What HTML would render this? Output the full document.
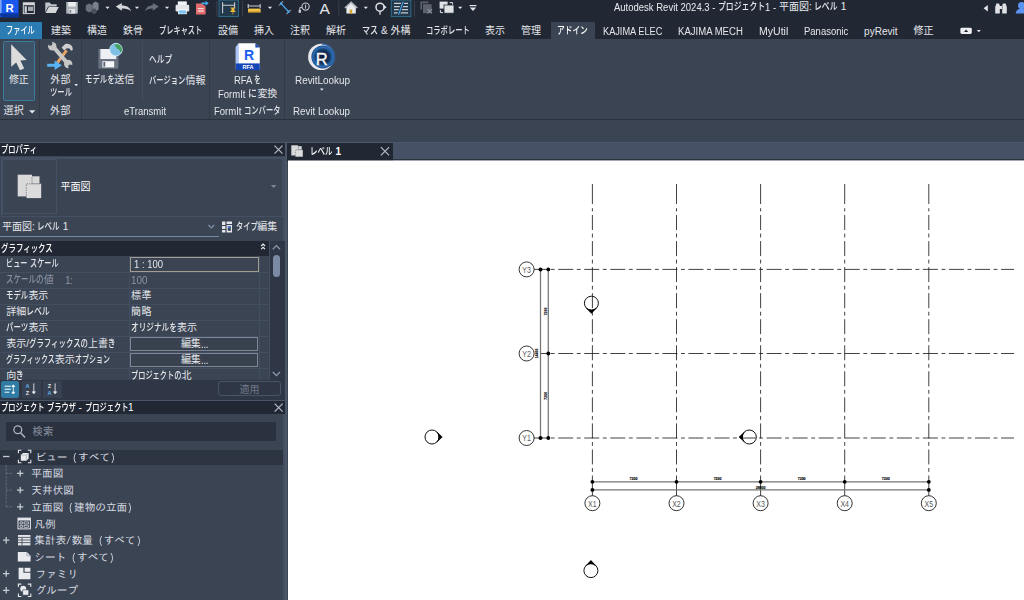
<!DOCTYPE html>
<html lang="ja"><head><meta charset="utf-8"><title>Autodesk Revit 2024.3 - プロジェクト1 - 平面図: レベル 1</title>
<style>
html,body{margin:0;padding:0;background:#3b4453;overflow:hidden}
#root{position:relative;width:1024px;height:600px;overflow:hidden;background:#3b4453;font-family:'Liberation Sans','Noto Sans CJK JP',sans-serif}
.b{position:absolute;box-sizing:border-box}
.t{position:absolute;white-space:pre}
.k{display:inline-block;transform-origin:0 50%;white-space:pre;font-weight:500}
svg{position:absolute;overflow:visible}
</style></head><body><div id="root">
<div class="b" style="left:0.00px;top:0.00px;width:1024.00px;height:39.00px;background:#212834;"></div>
<div class="b" style="left:0.00px;top:21.50px;width:41.50px;height:17.00px;background:#2b7cb3;"></div>
<div class="b" style="left:550.50px;top:21.50px;width:44.00px;height:18.00px;background:#3b4453;"></div>
<div class="b" style="left:0.00px;top:39.00px;width:1024.00px;height:80.50px;background:#3b4453;"></div>
<div class="b" style="left:0.00px;top:119.00px;width:1024.00px;height:1.00px;background:#2a313d;"></div>
<div class="b" style="left:0.00px;top:142.00px;width:1024.00px;height:1.20px;background:#4b566a;"></div>
<div class="b" style="left:39.00px;top:40.00px;width:1.00px;height:79.00px;background:#323a47;"></div>
<div class="b" style="left:81.00px;top:40.00px;width:1.00px;height:79.00px;background:#323a47;"></div>
<div class="b" style="left:209.00px;top:40.00px;width:1.00px;height:79.00px;background:#323a47;"></div>
<div class="b" style="left:284.00px;top:40.00px;width:1.00px;height:79.00px;background:#323a47;"></div>
<div class="b" style="left:141.60px;top:41.00px;width:1.00px;height:60.00px;background:#434c5d;"></div>
<div class="b" style="left:3.30px;top:41.30px;width:31.40px;height:59.50px;background:#3d5267;border:1px solid #3c7c9e;border-radius:1.5px;"></div>
<div class="b" style="left:0.00px;top:143.20px;width:284.70px;height:13.30px;background:#212834;"></div>
<div class="b" style="left:0.00px;top:156.50px;width:284.70px;height:1.00px;background:#465166;"></div>
<div class="b" style="left:284.70px;top:143.20px;width:2.80px;height:457.00px;background:#4a5568;"></div>
<div class="b" style="left:283.00px;top:157.50px;width:1.70px;height:443.00px;background:#434d60;"></div>
<div class="b" style="left:1.00px;top:157.60px;width:282.00px;height:59.00px;border:1px solid #455064;"></div>
<div class="b" style="left:2.20px;top:159.20px;width:54.80px;height:54.80px;border:1px solid #465166;"></div>
<div class="b" style="left:0.00px;top:235.80px;width:218.50px;height:1.10px;background:#7489a8;"></div>
<div class="b" style="left:0.00px;top:241.00px;width:269.00px;height:14.50px;background:#212834;"></div>
<div class="b" style="left:0.00px;top:271.50px;width:269.00px;height:1.00px;background:#444e61;"></div>
<div class="b" style="left:0.00px;top:287.50px;width:269.00px;height:1.00px;background:#444e61;"></div>
<div class="b" style="left:0.00px;top:303.50px;width:269.00px;height:1.00px;background:#444e61;"></div>
<div class="b" style="left:0.00px;top:319.50px;width:269.00px;height:1.00px;background:#444e61;"></div>
<div class="b" style="left:0.00px;top:335.50px;width:269.00px;height:1.00px;background:#444e61;"></div>
<div class="b" style="left:0.00px;top:351.50px;width:269.00px;height:1.00px;background:#444e61;"></div>
<div class="b" style="left:0.00px;top:367.50px;width:269.00px;height:1.00px;background:#444e61;"></div>
<div class="b" style="left:129.30px;top:255.50px;width:1.00px;height:125.00px;background:#444e61;"></div>
<div class="b" style="left:258.80px;top:255.50px;width:1.00px;height:125.00px;background:#444e61;"></div>
<div class="b" style="left:269.00px;top:241.00px;width:1.00px;height:140.00px;background:#444e61;"></div>
<div class="b" style="left:129.60px;top:256.50px;width:129.20px;height:15.20px;border:1px solid #a39c93;"></div>
<div class="b" style="left:130.20px;top:337.20px;width:128.00px;height:14.20px;background:#39414f;border:1px solid #7d8696;"></div>
<div class="b" style="left:130.20px;top:353.30px;width:128.00px;height:14.20px;background:#39414f;border:1px solid #7d8696;"></div>
<div class="b" style="left:269.50px;top:241.00px;width:15.20px;height:140.00px;background:#2f3746;"></div>
<div class="b" style="left:273.00px;top:254.50px;width:7.00px;height:22.00px;background:#7b8aa5;border-radius:3.5px;"></div>
<div class="b" style="left:0.00px;top:380.30px;width:284.70px;height:19.40px;background:#2f3746;"></div>
<div class="b" style="left:0.90px;top:381.00px;width:18.00px;height:16.60px;background:#2f7ba4;border-radius:2px;"></div>
<div class="b" style="left:22.00px;top:381.00px;width:18.80px;height:16.60px;background:#384152;"></div>
<div class="b" style="left:43.20px;top:381.00px;width:18.80px;height:16.60px;background:#384152;"></div>
<div class="b" style="left:218.00px;top:381.00px;width:63.00px;height:14.60px;border:1px solid #4a5468;border-radius:3px;"></div>
<div class="b" style="left:0.00px;top:399.60px;width:284.70px;height:1.00px;background:#4a5568;"></div>
<div class="b" style="left:0.00px;top:400.60px;width:284.70px;height:13.00px;background:#212834;"></div>
<div class="b" style="left:6.00px;top:422.40px;width:270.40px;height:18.60px;background:#2b323f;"></div>
<div class="b" style="left:0.00px;top:449.90px;width:283.00px;height:14.80px;background:#2c3441;"></div>
<div class="b" style="left:288.00px;top:143.00px;width:736.00px;height:17.50px;background:#475166;"></div>
<div class="b" style="left:288.00px;top:158.80px;width:736.00px;height:1.70px;background:#2b323e;"></div>
<div class="b" style="left:287.30px;top:143.00px;width:105.50px;height:17.50px;background:#212834;"></div>
<svg width="1024" height="600" viewBox="0 0 1024 600" style="left:0;top:0">
<rect x="0" y="0" width="18.5" height="17.2" fill="#1858ee"/>
<rect x="0" y="0" width="1.6" height="14" fill="#7da6f7"/>
<polygon points="0,13.2 18.5,13.2 18.5,17.2 2.2,17.2 0,15" fill="#0b369e"/>
<text x="9.6" y="11.6" font-family='"Liberation Sans",sans-serif' font-weight="bold" font-size="11.5" text-anchor="middle" fill="#fff">R</text>
<rect x="23.3" y="2.8" width="11" height="10.8" fill="none" stroke="#d4d6da" stroke-width="1"/>
<rect x="23.3" y="2.8" width="11" height="2.4" fill="#d4d6da"/>
<rect x="24.6" y="6.2" width="2.2" height="6.6" fill="#d4d6da"/>
<rect x="28" y="6.6" width="5.2" height="4.4" fill="#d4d6da" opacity="0.75"/>
<path d="M45.3 12.6 V2.6 h4.4 l1.4 1.6 h5.6 v2.2 h-8.6 l-2.8 6.2z" fill="#bfc2c8"/>
<path d="M45.6 12.9 l3.2 -6 h10 l-3.2 6z" fill="#d4d6da"/>
<path d="M66.2 2 h11.6 v11.6 h-11.6z" fill="#aeb2b9"/>
<rect x="68.2" y="2" width="7.6" height="4.6" fill="#eceef1"/>
<rect x="68.8" y="9" width="6.4" height="4.6" fill="#e0e2e6"/>
<rect x="69.6" y="10" width="1.6" height="2.8" fill="#7d828b"/>
<path d="M85.8 5.2 l3.4 -1.8 3.4 1.8 v5.4 l-3.4 1.8 -3.4 -1.8z" fill="#6b717c"/>
<path d="M92.6 3.2 l3 -1.8 3 1.8 v6.4 l-3 1.8 -3 -1.8z" fill="#7b818c"/>
<circle cx="94" cy="11.2" r="2.6" fill="#4c525d"/>
<polygon points="105.40,6.70 109.60,6.70 107.50,9.10" fill="#e4e6ea"/>
<path d="M115.8 6.6 l6 -3.6 v2.4 c5 0 8.4 2 9.4 6.2 c-2.4 -2.6 -5.2 -3.2 -9.4 -3 v2.2z" fill="#d4d6da"/>
<polygon points="134.90,6.70 139.10,6.70 137.00,9.10" fill="#e4e6ea"/>
<path d="M158.8 6.6 l-6 -3.6 v2.4 c-4.4 0 -7 2 -7.6 6.2 c2 -2.6 4.2 -3.2 7.6 -3 v2.2z" fill="#6b717c"/>
<polygon points="164.90,6.70 169.10,6.70 167.00,9.10" fill="#e4e6ea"/>
<rect x="177.8" y="1.4" width="9" height="4.4" fill="#f4f5f7"/>
<rect x="175.6" y="4.8" width="13.6" height="6.6" rx="1.2" fill="#e4e6ea"/>
<rect x="178" y="9" width="8.8" height="5.2" fill="#f4f5f7"/>
<rect x="178.8" y="10.4" width="7.2" height="3.2" fill="#7cc4f2"/>
<path d="M196 3.6 h6 l3.6 2.8 v8.2 h-9.6z" fill="#e26a6c"/>
<rect x="197.8" y="8" width="6" height="1.2" fill="#f7d5d5"/><rect x="197.8" y="10.4" width="6" height="1.4" fill="#f7d5d5"/>
<path d="M201.6 2.4 h4 v-1.6 l3.2 2.5 -3.2 2.5 v-1.6 h-4z" fill="#4aa8ea"/>
<rect x="216.4" y="1" width="0.9" height="15.6" fill="#3a4250"/>
<rect x="219" y="0" width="19.4" height="16.6" fill="#22394b" stroke="#2f718f" stroke-width="0.9"/>
<path d="M222.6 2.2 v11 M234.6 2.2 v6 M222.6 5.2 h12" stroke="#c9ccd1" stroke-width="1.1" fill="none"/>
<path d="M230.6 7.4 h4.6 v1.2 h-0.9 v1.7 l1.2 1 v0.7 h-5.2 v-0.7 l1.2 -1 v-1.7 h-0.9z M232.6 12 h0.7 v2.4 h-0.7z" fill="#eab83c"/>
<rect x="242" y="1" width="0.9" height="15.6" fill="#3a4250"/>
<path d="M248.2 4 v4 M260.2 4 v4 M248.2 6 h12" stroke="#c9ccd1" stroke-width="1.1" fill="none"/>
<rect x="248" y="8.6" width="12.6" height="3.8" fill="#f0c24a"/>
<rect x="248" y="11.4" width="12.6" height="1" fill="#b98d22"/>
<polygon points="267.90,6.70 272.10,6.70 270.00,9.10" fill="#e4e6ea"/>
<path d="M279 5.6 l4 -4.4 M286.6 14.2 l4.2 -4.4" stroke="#c9ccd1" stroke-width="1" fill="none"/>
<path d="M281.2 3.6 l7.4 8.2" stroke="#49a6ea" stroke-width="1.3" fill="none"/>
<circle cx="281.2" cy="3.6" r="1.3" fill="#49a6ea"/><circle cx="288.6" cy="11.8" r="1.3" fill="#49a6ea"/>
<circle cx="305.6" cy="6.6" r="3.6" fill="none" stroke="#c9ccd1" stroke-width="1.1"/>
<rect x="305.1" y="4.6" width="1" height="4" fill="#c9ccd1"/>
<path d="M302 7.6 h-2.2 v3" stroke="#c9ccd1" stroke-width="1" fill="none"/><rect x="298.6" y="10" width="2.4" height="2.8" fill="#c9ccd1"/>
<text x="324.7" y="13.8" font-family='"Liberation Sans",sans-serif' font-size="15.5" text-anchor="middle" fill="#e4e6ea">A</text>
<rect x="338.4" y="1" width="0.9" height="15.6" fill="#3a4250"/>
<path d="M344.4 7.6 l6.7 -6.4 6.7 6.4 -1.2 1 -5.5 -5.2 -5.5 5.2z" fill="#b9bcc2"/>
<path d="M346.4 7.6 l4.7 -4.4 4.7 4.4 v6 h-9.4z" fill="#e9ebee"/>
<rect x="349.6" y="9.6" width="2.6" height="4" fill="#d9a92e"/>
<polygon points="363.70,6.70 367.90,6.70 365.80,9.10" fill="#e4e6ea"/>
<circle cx="380" cy="7.2" r="4" fill="none" stroke="#e0e2e6" stroke-width="1.5"/>
<path d="M383.6 4.8 l3 2.4 -3 2.4z M379.4 11.2 h1.3 v3.6 h-1.3z" fill="#e0e2e6"/>
<rect x="391.3" y="0" width="19.6" height="16.6" fill="#22394b" stroke="#2f718f" stroke-width="0.9"/>
<path d="M394 3.4 h14 M394 6.6 h14 M394 9.6 h14 M394 12.8 h14" stroke="#c9ccd1" stroke-width="1.3" fill="none"/>
<path d="M403.2 1.6 l-4.6 13" stroke="#22394b" stroke-width="3" fill="none"/><path d="M403.2 1.6 l-4.6 13" stroke="#49a6ea" stroke-width="1.2" fill="none"/>
<rect x="414.1" y="1" width="0.9" height="15.6" fill="#3a4250"/>
<path d="M420.4 1.6 h8 v1.6 h-6.4 v6.4 h-1.6z" fill="#5c626d"/><rect x="423" y="4.2" width="8.6" height="9" fill="#5c626d"/>
<path d="M427.6 9 l4.4 4.4 M432 9 l-4.4 4.4" stroke="#8a909b" stroke-width="1.1"/>
<rect x="439.6" y="1.6" width="8" height="7" fill="#e0e2e6"/><rect x="444" y="5" width="10" height="8.2" fill="#e0e2e6" stroke="#1f2631" stroke-width="0.8"/>
<path d="M449.6 2.6 h3 v2" stroke="#e0e2e6" stroke-width="1" fill="none"/><path d="M440.4 10 v2.6 h2.6" stroke="#e0e2e6" stroke-width="1" fill="none"/>
<polygon points="458.10,6.70 462.30,6.70 460.20,9.10" fill="#e4e6ea"/>
<rect x="469.6" y="5" width="6.8" height="1.2" fill="#e4e6ea"/>
<polygon points="469.80,7.50 476.20,7.50 473.00,10.90" fill="#e4e6ea"/>
<polygon points="987.8,5 987.8,11.4 983.6,8.2" fill="#e4e6ea"/>
<path d="M996.4 3.6 h2.6 l0.8 2 v8 h-4.6 v-6.6z M1005.6 3.6 h-2.6 l-0.8 2 v8 h4.6 v-6.6z M999.4 6 h3.2 v3 h-3.2z" fill="#e0e2e6"/>
<circle cx="1021.6" cy="5.6" r="3.6" fill="#5b93f0"/><path d="M1015.6 13.4 c1 -4 3.4 -4.6 6 -4.6 h2.4 v4.6z" fill="#5b93f0"/>
<rect x="960.4" y="27.8" width="11.4" height="6.2" rx="1.4" fill="#eceef1"/>
<polygon points="964,32 968.2,32 966.1,29.6" fill="#1f2631"/>
<polygon points="976.80,30.10 980.80,30.10 978.80,32.30" fill="#e4e6ea"/>
<polygon points="11.2,44.2 26.7,59.9 20.4,60.6 24.2,68.4 20,70.2 16.2,62.6 11.2,66.8" fill="#dcdcdc"/>
<path d="M57.400 62.600 l9.200 -12.200" stroke="#e9a463" stroke-width="2.900" fill="none"/>
<path d="M61.600 47.400 l3.600 -3.400 c3 -0.800 5.600 0.400 7.200 3 l0.400 3 -1.800 0.800 -1.400 -2.400 -2.800 -0.200 -2.600 2.200z" fill="#cfcfcf"/>
<path d="M53.200 46.600 l14.200 16.600" stroke="#c6c6c6" stroke-width="4" stroke-linecap="round" fill="none"/>
<circle cx="52.200" cy="46.200" r="4.200" fill="#c6c6c6"/><circle cx="50.200" cy="43.600" r="2.200" fill="#3b4453"/>
<circle cx="68.200" cy="64" r="4.200" fill="#c6c6c6"/><circle cx="70.400" cy="66.600" r="2.200" fill="#3b4453"/>
<path d="M47.200 63.800 h7.400 v-3.300 l7.200 4.800 -7.200 4.800 v-3.300 h-7.400z" fill="#58b4f4"/>
<polygon points="74.40,84.10 78.00,84.10 76.20,86.30" fill="#e4e6ea"/>
<rect x="98.4" y="49" width="20" height="19.8" rx="1" fill="#6a7382"/>
<rect x="100.4" y="49" width="15.8" height="10" fill="#eef0f3"/>
<rect x="102.4" y="61.2" width="11.8" height="6.2" fill="#f6f7f9"/><rect x="103.4" y="62" width="1.8" height="4.6" fill="#566070"/>
<circle cx="116" cy="49.6" r="6.3" fill="#7fc1e6" stroke="#d6ecf7" stroke-width="0.8"/>
<path d="M114 45.400 c1.600 -1.400 4.400 -1.800 6 -0.200 l1.600 2.600 0.400 3.400 -1.600 1 -1.400 -2.600 -2.400 -1 -0.400 -1.800z" fill="#46a35c"/>
<path d="M235.8 47 l3 -3.8 h16.600 l4.400 4.200 v22.700 h-24z" fill="#ffffff"/>
<path d="M235.8 47 l3 -3.800 v20.600 h-3z" fill="#a9c4f6"/>
<path d="M255.400 43.200 l4.400 4.200 h-4.400z" fill="#1546b8"/>
<rect x="235.800" y="63.400" width="24" height="6.700" fill="#1546b8"/>
<text x="249" y="59.800" font-family='"Liberation Sans",sans-serif' font-weight="bold" font-size="14" text-anchor="middle" fill="#1b5df0">R</text>
<text x="248" y="69" font-family='"Liberation Sans",sans-serif' font-weight="bold" font-size="5.600" text-anchor="middle" fill="#fff">RFA</text>
<defs><radialGradient id="rlg" cx="0.5" cy="0.5" r="0.5"><stop offset="0" stop-color="#0b1730"/><stop offset="0.6" stop-color="#123461"/><stop offset="0.85" stop-color="#2c6db3"/><stop offset="1" stop-color="#1d4a86"/></radialGradient></defs>
<circle cx="321.300" cy="56.900" r="13.200" fill="#e6e8ec"/>
<circle cx="322.900" cy="56.900" r="11.500" fill="url(#rlg)"/>
<path d="M322 44 a13 13 0 0 1 12.400 13 a13 13 0 0 1 -4 9" stroke="#2a62a8" stroke-width="1.600" fill="none" opacity="0.900"/>
<text x="321.800" y="64.600" font-family='"Liberation Sans",sans-serif' font-size="16.500" text-anchor="middle" fill="#f6f6f6" stroke="#f6f6f6" stroke-width="0.400">R</text>
<polygon points="320.00,88.50 323.60,88.50 321.80,90.70" fill="#e4e6ea"/>
<polygon points="29.00,110.15 35.40,110.15 32.20,113.45" fill="#e4e6ea"/>
<path d="M274.50 145.60 l8.00 8.00 M282.50 145.60 l-8.00 8.00" stroke="#b4bac7" stroke-width="1.2" fill="none"/>
<path d="M274.65 403.55 l8.00 8.00 M282.65 403.55 l-8.00 8.00" stroke="#b4bac7" stroke-width="1.2" fill="none"/>
<path d="M380.90 147.20 l8.20 8.20 M389.10 147.20 l-8.20 8.20" stroke="#b4bac7" stroke-width="1.2" fill="none"/>
<rect x="17.700" y="174.700" width="14.300" height="21.700" fill="#d9d9d9"/>
<rect x="32" y="176.300" width="7.500" height="7.400" fill="#d9d9d9"/>
<rect x="26.300" y="183.700" width="14.900" height="14.400" fill="#dcdcdc"/>
<path d="M26.300 198 V183.900 H41 M32 183.600 V176.400" stroke="#5a5f69" stroke-width="0.700" stroke-dasharray="1.400 1" fill="none"/>
<polygon points="270.80,185.10 276.40,185.10 273.60,188.10" fill="#7c8698"/>
<path d="M208.400 225 l2.900 2.900 2.900 -2.900" stroke="#8190a8" stroke-width="1.300" fill="none"/>
<path d="M222 221.600 h3.400 v3.400 h-3.400z M222 226 h3.400 v3 h-3.400z M222 230 h3.400 v2.400 h-3.400z M226.600 221.600 h5.400 v2.400 h-5.400z M226.600 225 h5.400 v7.400 h-5.400z" fill="#e4e6ea"/>
<rect x="227.800" y="226.200" width="3" height="4.600" fill="#3b4453"/>
<rect x="228" y="226.400" width="2.600" height="1.600" fill="#3d7de0"/>
<path d="M261.200 246 l1.900 -1.900 1.900 1.900 M261.200 249.200 l1.900 -1.900 1.900 1.900" stroke="#f0f1f3" stroke-width="1.100" fill="none"/>
<path d="M272.800 249.200 l3.600 -3.600 3.600 3.600" stroke="#8e99ae" stroke-width="1.300" fill="none"/>
<path d="M272.800 372 l3.600 3.600 3.600 -3.600" stroke="#8e99ae" stroke-width="1.300" fill="none"/>
<path d="M4.600 386.200 h6.200 M4.600 389.200 h6.200 M4.600 392.200 h4.600" stroke="#fff" stroke-width="1" fill="none"/>
<path d="M13.300 385.400 v8 M11.900 386.600 l1.400 -1.800 1.400 1.800z M11.900 392.200 l1.400 1.800 1.400 -1.800z" stroke="#fff" stroke-width="0.800" fill="#fff"/>
<text x="27.500" y="388.200" font-family='"Liberation Sans",sans-serif' font-weight="bold" font-size="5.600" text-anchor="middle" fill="#5fb0ea">A</text>
<text x="27.500" y="394.600" font-family='"Liberation Sans",sans-serif' font-weight="bold" font-size="5.600" text-anchor="middle" fill="#e4e6ea">Z</text>
<path d="M33.800 383.400 v9.600 M32.300 391.800 l1.500 2 1.500 -2z" stroke="#e4e6ea" stroke-width="0.900" fill="#e4e6ea"/>
<text x="49.400" y="388.200" font-family='"Liberation Sans",sans-serif' font-weight="bold" font-size="5.600" text-anchor="middle" fill="#e4e6ea">Z</text>
<text x="49.400" y="394.600" font-family='"Liberation Sans",sans-serif' font-weight="bold" font-size="5.600" text-anchor="middle" fill="#5fb0ea">A</text>
<path d="M55.100 383.400 v9.600 M53.600 391.800 l1.500 2 1.500 -2z" stroke="#e4e6ea" stroke-width="0.900" fill="#e4e6ea"/>
<circle cx="17.800" cy="429.800" r="3.900" fill="none" stroke="#aeb5c0" stroke-width="1.300"/><path d="M20.600 432.800 l4.400 4.600" stroke="#aeb5c0" stroke-width="1.500"/>
<path d="M3.00 456.50 h6.400" stroke="#c6cbd3" stroke-width="1.300" fill="none"/>
<path d="M17.00 473.40 h6.400 M20.20 470.20 v6.400" stroke="#c6cbd3" stroke-width="1.300" fill="none"/>
<path d="M17.00 490.10 h6.400 M20.20 486.90 v6.400" stroke="#c6cbd3" stroke-width="1.300" fill="none"/>
<path d="M17.00 506.80 h6.400 M20.20 503.60 v6.400" stroke="#c6cbd3" stroke-width="1.300" fill="none"/>
<path d="M3.00 540.20 h6.400 M6.20 537.00 v6.400" stroke="#c6cbd3" stroke-width="1.300" fill="none"/>
<path d="M3.00 573.60 h6.400 M6.20 570.40 v6.400" stroke="#c6cbd3" stroke-width="1.300" fill="none"/>
<path d="M3.00 590.30 h6.400 M6.20 587.10 v6.400" stroke="#c6cbd3" stroke-width="1.300" fill="none"/>
<path d="M6.200 465 V506.80 M6.200 473.40 h7 M6.200 490.10 h7 M6.200 506.80 h7" stroke="#667083" stroke-width="0.900" stroke-dasharray="2.4 1.2" fill="none"/>
<path d="M18.40 453.30 v-3.00 h3.00 M27.80 450.30 h3.00 v3.00 M18.40 459.70 v3.00 h3.00 M27.80 462.70 h3.00 v-3.00" stroke="#e4e6ea" stroke-width="1.100" fill="none"/>
<path d="M20.800 455.10 l2.200 -2.200 h5.600 v5.600 l-2.200 2.200 h-5.600z" fill="#e9ebee"/>
<path d="M20.800 455.10 h5.600 v5.600 M26.400 455.10 l2.200 -2.200" stroke="#9aa1ad" stroke-width="0.600" fill="none"/>
<rect x="18" y="518.10" width="12.400" height="10.800" fill="none" stroke="#e4e6ea" stroke-width="1"/>
<rect x="18" y="518.10" width="12.400" height="2.400" fill="#e4e6ea"/>
<path d="M20 521.90 h2.600 v2 h-2.600z M24 521.90 h4.600 v2 h-4.600z M20 525.30 h2.600 v2 h-2.600z M24 525.30 h4.600 v2 h-4.600z" fill="none" stroke="#e4e6ea" stroke-width="0.700"/>
<rect x="18" y="535.00" width="12.400" height="10.400" fill="#e4e6ea"/>
<path d="M18 537.40 h12.400 M18 540.00 h12.400 M18 542.60 h12.400 M22 537.40 v8" stroke="#3b4453" stroke-width="0.800" fill="none"/>
<path d="M17.800 552.10 h9 l3.800 3.600 v5.800 h-12.800z" fill="#e9ebee"/>
<path d="M26.800 552.10 v3.600 h3.800" stroke="#8d95a3" stroke-width="0.700" fill="none"/>
<path d="M18.600 567.80 h4.800 v5 h7 v6.400 h-11.800z" fill="#e9ebee"/>
<rect x="24.600" y="567.80" width="5.800" height="4" fill="#e9ebee"/>
<path d="M18.40 587.10 v-3.00 h3.00 M27.80 584.10 h3.00 v3.00 M18.40 593.50 v3.00 h3.00 M27.80 596.50 h3.00 v-3.00" stroke="#e4e6ea" stroke-width="1.100" fill="none"/>
<circle cx="23.200" cy="588.70" r="3" fill="#e9ebee"/><rect x="22.800" y="589.90" width="6" height="5.200" fill="#e9ebee" stroke="#3b4453" stroke-width="0.600"/>
<rect x="291.300" y="145.300" width="6.800" height="10.200" fill="#d9d9d9"/>
<rect x="298.100" y="146.200" width="3.600" height="3.500" fill="#d9d9d9"/>
<rect x="295.400" y="149.800" width="7.400" height="6.900" fill="#dcdcdc"/>
<path d="M295.400 156.600 V149.900 H302.700 M298.100 149.700 V146.300" stroke="#5a5f69" stroke-width="0.500" stroke-dasharray="1 0.800" fill="none"/>
</svg>
<svg width="1024" height="600" viewBox="0 0 1024 600" style="left:0;top:0">
<rect x="288" y="160.5" width="736" height="440" fill="#ffffff"/>
<line x1="592.40" y1="184" x2="592.40" y2="204" stroke="#111" stroke-width="0.8"/>
<line x1="592.40" y1="208.20" x2="592.40" y2="481.8" stroke="#111" stroke-width="0.8" stroke-dasharray="15 3.6 3.85 3.6" stroke-dashoffset="19.25"/>
<line x1="592.40" y1="481.8" x2="592.40" y2="496" stroke="#111" stroke-width="0.8"/>
<line x1="676.50" y1="184" x2="676.50" y2="204" stroke="#111" stroke-width="0.8"/>
<line x1="676.50" y1="208.20" x2="676.50" y2="481.8" stroke="#111" stroke-width="0.8" stroke-dasharray="15 3.6 3.85 3.6" stroke-dashoffset="19.25"/>
<line x1="676.50" y1="481.8" x2="676.50" y2="496" stroke="#111" stroke-width="0.8"/>
<line x1="760.60" y1="184" x2="760.60" y2="204" stroke="#111" stroke-width="0.8"/>
<line x1="760.60" y1="208.20" x2="760.60" y2="481.8" stroke="#111" stroke-width="0.8" stroke-dasharray="15 3.6 3.85 3.6" stroke-dashoffset="19.25"/>
<line x1="760.60" y1="481.8" x2="760.60" y2="496" stroke="#111" stroke-width="0.8"/>
<line x1="844.70" y1="184" x2="844.70" y2="204" stroke="#111" stroke-width="0.8"/>
<line x1="844.70" y1="208.20" x2="844.70" y2="481.8" stroke="#111" stroke-width="0.8" stroke-dasharray="15 3.6 3.85 3.6" stroke-dashoffset="19.25"/>
<line x1="844.70" y1="481.8" x2="844.70" y2="496" stroke="#111" stroke-width="0.8"/>
<line x1="928.80" y1="184" x2="928.80" y2="204" stroke="#111" stroke-width="0.8"/>
<line x1="928.80" y1="208.20" x2="928.80" y2="481.8" stroke="#111" stroke-width="0.8" stroke-dasharray="15 3.6 3.85 3.6" stroke-dashoffset="19.25"/>
<line x1="928.80" y1="481.8" x2="928.80" y2="496" stroke="#111" stroke-width="0.8"/>
<line x1="548.4" y1="269.40" x2="1014" y2="269.40" stroke="#111" stroke-width="0.8" stroke-dasharray="15 3.6 3.85 3.6" stroke-dashoffset="16.25"/>
<line x1="534" y1="269.40" x2="548.4" y2="269.40" stroke="#111" stroke-width="0.8"/>
<line x1="548.4" y1="353.50" x2="1014" y2="353.50" stroke="#111" stroke-width="0.8" stroke-dasharray="15 3.6 3.85 3.6" stroke-dashoffset="16.25"/>
<line x1="540.5" y1="353.50" x2="548.4" y2="353.50" stroke="#111" stroke-width="0.8"/>
<line x1="548.4" y1="438.00" x2="1014" y2="438.00" stroke="#111" stroke-width="0.8" stroke-dasharray="15 3.6 3.85 3.6" stroke-dashoffset="16.25"/>
<line x1="534" y1="438.00" x2="548.4" y2="438.00" stroke="#111" stroke-width="0.8"/>
<line x1="540.50" y1="269.40" x2="540.50" y2="438.00" stroke="#757575" stroke-width="1.25"/>
<line x1="548.30" y1="269.40" x2="548.30" y2="438.00" stroke="#757575" stroke-width="1.25"/>
<line x1="592.40" y1="481.80" x2="928.80" y2="481.80" stroke="#757575" stroke-width="1.25"/>
<line x1="592.40" y1="489.90" x2="928.80" y2="489.90" stroke="#757575" stroke-width="1.25"/>
<circle cx="540.50" cy="269.40" r="2.00" fill="#000"/>
<circle cx="548.30" cy="269.40" r="1.90" fill="#000"/>
<circle cx="548.30" cy="353.50" r="1.90" fill="#000"/>
<circle cx="540.50" cy="438.00" r="2.00" fill="#000"/>
<circle cx="548.30" cy="438.00" r="1.90" fill="#000"/>
<circle cx="592.40" cy="481.80" r="1.90" fill="#000"/>
<circle cx="592.40" cy="489.90" r="1.90" fill="#000"/>
<circle cx="676.50" cy="481.80" r="1.90" fill="#000"/>
<circle cx="760.60" cy="481.80" r="1.90" fill="#000"/>
<circle cx="844.70" cy="481.80" r="1.90" fill="#000"/>
<circle cx="928.80" cy="481.80" r="1.90" fill="#000"/>
<circle cx="928.80" cy="489.90" r="1.90" fill="#000"/>
<circle cx="526.60" cy="269.40" r="7.5" fill="#fff" stroke="#111" stroke-width="0.85"/>
<text x="526.60" y="272.85" font-family='"Liberation Sans",sans-serif' font-size="9.6" text-anchor="middle" fill="#5a5a5a" textLength="8.6" lengthAdjust="spacingAndGlyphs">Y3</text>
<circle cx="526.60" cy="353.50" r="7.5" fill="#fff" stroke="#111" stroke-width="0.85"/>
<text x="526.60" y="356.95" font-family='"Liberation Sans",sans-serif' font-size="9.6" text-anchor="middle" fill="#5a5a5a" textLength="8.6" lengthAdjust="spacingAndGlyphs">Y2</text>
<circle cx="526.60" cy="438.00" r="7.5" fill="#fff" stroke="#111" stroke-width="0.85"/>
<text x="526.60" y="441.45" font-family='"Liberation Sans",sans-serif' font-size="9.6" text-anchor="middle" fill="#5a5a5a" textLength="8.6" lengthAdjust="spacingAndGlyphs">Y1</text>
<circle cx="592.40" cy="503.20" r="7.5" fill="#fff" stroke="#111" stroke-width="0.85"/>
<text x="592.40" y="506.65" font-family='"Liberation Sans",sans-serif' font-size="9.6" text-anchor="middle" fill="#5a5a5a" textLength="8.6" lengthAdjust="spacingAndGlyphs">X1</text>
<circle cx="676.50" cy="503.20" r="7.5" fill="#fff" stroke="#111" stroke-width="0.85"/>
<text x="676.50" y="506.65" font-family='"Liberation Sans",sans-serif' font-size="9.6" text-anchor="middle" fill="#5a5a5a" textLength="8.6" lengthAdjust="spacingAndGlyphs">X2</text>
<circle cx="760.60" cy="503.20" r="7.5" fill="#fff" stroke="#111" stroke-width="0.85"/>
<text x="760.60" y="506.65" font-family='"Liberation Sans",sans-serif' font-size="9.6" text-anchor="middle" fill="#5a5a5a" textLength="8.6" lengthAdjust="spacingAndGlyphs">X3</text>
<circle cx="844.70" cy="503.20" r="7.5" fill="#fff" stroke="#111" stroke-width="0.85"/>
<text x="844.70" y="506.65" font-family='"Liberation Sans",sans-serif' font-size="9.6" text-anchor="middle" fill="#5a5a5a" textLength="8.6" lengthAdjust="spacingAndGlyphs">X4</text>
<circle cx="928.80" cy="503.20" r="7.5" fill="#fff" stroke="#111" stroke-width="0.85"/>
<text x="928.80" y="506.65" font-family='"Liberation Sans",sans-serif' font-size="9.6" text-anchor="middle" fill="#5a5a5a" textLength="8.6" lengthAdjust="spacingAndGlyphs">X5</text>
<text x="633.45" y="480.30" font-family='"Liberation Sans",sans-serif' font-weight="bold" font-size="3.5" text-anchor="middle" fill="#000" stroke="#000" stroke-width="0.12">7200</text>
<text x="717.55" y="480.30" font-family='"Liberation Sans",sans-serif' font-weight="bold" font-size="3.5" text-anchor="middle" fill="#000" stroke="#000" stroke-width="0.12">7200</text>
<text x="801.65" y="480.30" font-family='"Liberation Sans",sans-serif' font-weight="bold" font-size="3.5" text-anchor="middle" fill="#000" stroke="#000" stroke-width="0.12">7200</text>
<text x="885.75" y="480.30" font-family='"Liberation Sans",sans-serif' font-weight="bold" font-size="3.5" text-anchor="middle" fill="#000" stroke="#000" stroke-width="0.12">7200</text>
<text x="760.60" y="488.60" font-family='"Liberation Sans",sans-serif' font-weight="bold" font-size="3.5" text-anchor="middle" fill="#000" stroke="#000" stroke-width="0.12">28800</text>
<text x="546.60" y="311.45" font-family='"Liberation Sans",sans-serif' font-weight="bold" font-size="3.5" text-anchor="middle" fill="#000" stroke="#000" stroke-width="0.12" transform="rotate(-90 546.60 311.45)">7200</text>
<text x="546.60" y="395.75" font-family='"Liberation Sans",sans-serif' font-weight="bold" font-size="3.5" text-anchor="middle" fill="#000" stroke="#000" stroke-width="0.12" transform="rotate(-90 546.60 395.75)">7200</text>
<text x="537.90" y="353.50" font-family='"Liberation Sans",sans-serif' font-weight="bold" font-size="3.5" text-anchor="middle" fill="#000" stroke="#000" stroke-width="0.12" transform="rotate(-90 537.90 353.50)">14400</text>
<circle cx="591.40" cy="303.20" r="7.00" fill="#fff" fill-opacity="0" stroke="#111" stroke-width="1"/>
<mask id="mk1"><rect x="576.4" y="288.2" width="30" height="30" fill="#fff"/><circle cx="591.40" cy="303.20" r="6.60" fill="#000"/></mask>
<polygon points="585.90,307.90 596.90,307.90 591.40,313.80" fill="#000" mask="url(#mk1)"/>
<circle cx="432.00" cy="437.00" r="7.00" fill="#fff" fill-opacity="0" stroke="#111" stroke-width="1"/>
<mask id="mk2"><rect x="417.0" y="422.0" width="30" height="30" fill="#fff"/><circle cx="432.00" cy="437.00" r="6.60" fill="#000"/></mask>
<polygon points="436.70,431.50 436.70,442.50 442.60,437.00" fill="#000" mask="url(#mk2)"/>
<circle cx="749.30" cy="437.00" r="7.00" fill="#fff" fill-opacity="0" stroke="#111" stroke-width="1"/>
<mask id="mk3"><rect x="734.3" y="422.0" width="30" height="30" fill="#fff"/><circle cx="749.30" cy="437.00" r="6.60" fill="#000"/></mask>
<polygon points="744.60,431.50 744.60,442.50 738.70,437.00" fill="#000" mask="url(#mk3)"/>
<circle cx="590.90" cy="570.60" r="7.00" fill="#fff" fill-opacity="0" stroke="#111" stroke-width="1"/>
<mask id="mk4"><rect x="575.9" y="555.6" width="30" height="30" fill="#fff"/><circle cx="590.90" cy="570.60" r="6.60" fill="#000"/></mask>
<polygon points="585.40,565.90 596.40,565.90 590.90,560.00" fill="#000" mask="url(#mk4)"/>
</svg>
<span class="t" style="left:614.10px;top:-0.10px;font:normal 10px/14.00px 'Liberation Sans','Noto Sans CJK JP',sans-serif;color:#e8eaee;letter-spacing:0.000px"><span class="k" style="font-weight:inherit;position:relative;top:0.7px;width:104.04px;transform:scaleX(0.9500)">Autodesk Revit 2024.3 - </span><span class="k" style="width:47.08px;transform:scaleX(0.7847)">プロジェクト</span><span class="k" style="font-weight:inherit;position:relative;top:0.7px;width:13.73px;transform:scaleX(0.9500)">1 - </span>平面図: <span class="k" style="width:23.54px;transform:scaleX(0.7847)">レベル</span> 1</span>
<span class="t" style="left:5.60px;top:23.90px;font:normal 10px/14.00px 'Liberation Sans','Noto Sans CJK JP',sans-serif;color:#ffffff;letter-spacing:0.000px"><span class="k" style="width:28.80px;transform:scaleX(0.7200)">ファイル</span></span>
<span class="t" style="left:51.10px;top:23.90px;font:normal 10px/14.00px 'Liberation Sans','Noto Sans CJK JP',sans-serif;color:#e4e6ea;letter-spacing:-0.200px">建築</span>
<span class="t" style="left:87.10px;top:23.90px;font:normal 10px/14.00px 'Liberation Sans','Noto Sans CJK JP',sans-serif;color:#e4e6ea;letter-spacing:-0.200px">構造</span>
<span class="t" style="left:123.10px;top:23.90px;font:normal 10px/14.00px 'Liberation Sans','Noto Sans CJK JP',sans-serif;color:#e4e6ea;letter-spacing:-0.200px">鉄骨</span>
<span class="t" style="left:158.60px;top:23.90px;font:normal 10px/14.00px 'Liberation Sans','Noto Sans CJK JP',sans-serif;color:#e4e6ea;letter-spacing:0.000px"><span class="k" style="width:43.30px;transform:scaleX(0.7217)">プレキャスト</span></span>
<span class="t" style="left:218.10px;top:23.90px;font:normal 10px/14.00px 'Liberation Sans','Noto Sans CJK JP',sans-serif;color:#e4e6ea;letter-spacing:-0.200px">設備</span>
<span class="t" style="left:254.10px;top:23.90px;font:normal 10px/14.00px 'Liberation Sans','Noto Sans CJK JP',sans-serif;color:#e4e6ea;letter-spacing:-0.200px">挿入</span>
<span class="t" style="left:290.10px;top:23.90px;font:normal 10px/14.00px 'Liberation Sans','Noto Sans CJK JP',sans-serif;color:#e4e6ea;letter-spacing:-0.200px">注釈</span>
<span class="t" style="left:326.10px;top:23.90px;font:normal 10px/14.00px 'Liberation Sans','Noto Sans CJK JP',sans-serif;color:#e4e6ea;letter-spacing:-0.200px">解析</span>
<span class="t" style="left:362.10px;top:23.90px;font:normal 10px/14.00px 'Liberation Sans','Noto Sans CJK JP',sans-serif;color:#e4e6ea;letter-spacing:0.000px"><span class="k" style="width:16.07px;transform:scaleX(0.8033)">マス</span> &amp; 外構</span>
<span class="t" style="left:425.60px;top:23.90px;font:normal 10px/14.00px 'Liberation Sans','Noto Sans CJK JP',sans-serif;color:#e4e6ea;letter-spacing:0.000px"><span class="k" style="width:43.80px;transform:scaleX(0.7300)">コラボレート</span></span>
<span class="t" style="left:485.10px;top:23.90px;font:normal 10px/14.00px 'Liberation Sans','Noto Sans CJK JP',sans-serif;color:#e4e6ea;letter-spacing:-0.200px">表示</span>
<span class="t" style="left:521.10px;top:23.90px;font:normal 10px/14.00px 'Liberation Sans','Noto Sans CJK JP',sans-serif;color:#e4e6ea;letter-spacing:-0.200px">管理</span>
<span class="t" style="left:556.60px;top:23.90px;font:normal 10px/14.00px 'Liberation Sans','Noto Sans CJK JP',sans-serif;color:#ffffff;letter-spacing:0.000px"><span class="k" style="width:30.80px;transform:scaleX(0.7700)">アドイン</span></span>
<span class="t" style="left:603.10px;top:24.60px;font:normal 10px/14.00px 'Liberation Sans','Noto Sans CJK JP',sans-serif;color:#e4e6ea;letter-spacing:0.000px"><span class="k" style="font-weight:inherit;width:59.30px;transform:scaleX(0.9198)">KAJIMA ELEC</span></span>
<span class="t" style="left:678.10px;top:24.60px;font:normal 10px/14.00px 'Liberation Sans','Noto Sans CJK JP',sans-serif;color:#e4e6ea;letter-spacing:0.000px"><span class="k" style="font-weight:inherit;width:64.80px;transform:scaleX(0.9558)">KAJIMA MECH</span></span>
<span class="t" style="left:758.60px;top:24.60px;font:normal 10px/14.00px 'Liberation Sans','Noto Sans CJK JP',sans-serif;color:#e4e6ea;letter-spacing:0.000px"><span class="k" style="font-weight:inherit;width:29.30px;transform:scaleX(1.0547)">MyUtil</span></span>
<span class="t" style="left:804.10px;top:24.60px;font:normal 10px/14.00px 'Liberation Sans','Noto Sans CJK JP',sans-serif;color:#e4e6ea;letter-spacing:0.000px"><span class="k" style="font-weight:inherit;width:44.30px;transform:scaleX(0.9485)">Panasonic</span></span>
<span class="t" style="left:864.10px;top:24.60px;font:normal 10px/14.00px 'Liberation Sans','Noto Sans CJK JP',sans-serif;color:#e4e6ea;letter-spacing:0.000px">pyRevit</span>
<span class="t" style="left:913.60px;top:23.90px;font:normal 10px/14.00px 'Liberation Sans','Noto Sans CJK JP',sans-serif;color:#e4e6ea;letter-spacing:-0.200px">修正</span>
<span class="t" style="left:9.10px;top:73.40px;font:normal 10px/14.00px 'Liberation Sans','Noto Sans CJK JP',sans-serif;color:#e4e6ea;letter-spacing:-0.400px">修正</span>
<span class="t" style="left:50.35px;top:73.40px;font:normal 10px/14.00px 'Liberation Sans','Noto Sans CJK JP',sans-serif;color:#e4e6ea;letter-spacing:0.050px">外部</span>
<span class="t" style="left:49.60px;top:86.40px;font:normal 10px/14.00px 'Liberation Sans','Noto Sans CJK JP',sans-serif;color:#e4e6ea;letter-spacing:0.000px"><span class="k" style="width:22.05px;transform:scaleX(0.7350)">ツール</span></span>
<span class="t" style="left:84.60px;top:73.40px;font:normal 10px/14.00px 'Liberation Sans','Noto Sans CJK JP',sans-serif;color:#e4e6ea;letter-spacing:0.000px"><span class="k" style="width:29.55px;transform:scaleX(0.7387)">モデルを</span>送信</span>
<span class="t" style="left:149.10px;top:53.40px;font:normal 10px/14.00px 'Liberation Sans','Noto Sans CJK JP',sans-serif;color:#e4e6ea;letter-spacing:0.000px"><span class="k" style="width:23.30px;transform:scaleX(0.7767)">ヘルプ</span></span>
<span class="t" style="left:149.10px;top:73.90px;font:normal 10px/14.00px 'Liberation Sans','Noto Sans CJK JP',sans-serif;color:#e4e6ea;letter-spacing:0.000px"><span class="k" style="width:36.30px;transform:scaleX(0.7287)">バージョン</span>情報</span>
<span class="t" style="left:234.10px;top:73.40px;font:normal 10px/14.00px 'Liberation Sans','Noto Sans CJK JP',sans-serif;color:#e4e6ea;letter-spacing:-0.088px"><span class="k" style="font-weight:inherit;position:relative;top:0.7px;width:20.25px;transform:scaleX(0.9500)">RFA </span><span class="k" style="width:6.71px;transform:scaleX(0.6800)">を</span></span>
<span class="t" style="left:218.35px;top:86.90px;font:normal 10px/14.00px 'Liberation Sans','Noto Sans CJK JP',sans-serif;color:#e4e6ea;letter-spacing:0.000px"><span class="k" style="font-weight:inherit;position:relative;top:0.7px;width:30.09px;transform:scaleX(0.9500)">FormIt </span><span class="k" style="width:8.96px;transform:scaleX(0.8962)">に</span>変換</span>
<span class="t" style="left:294.60px;top:74.10px;font:normal 10px/14.00px 'Liberation Sans','Noto Sans CJK JP',sans-serif;color:#e4e6ea;letter-spacing:0.000px"><span class="k" style="font-weight:inherit;width:55.05px;transform:scaleX(0.9902)">RevitLookup</span></span>
<span class="t" style="left:3.60px;top:104.40px;font:normal 10px/14.00px 'Liberation Sans','Noto Sans CJK JP',sans-serif;color:#e4e6ea;letter-spacing:0.050px">選択</span>
<span class="t" style="left:50.10px;top:104.40px;font:normal 10px/14.00px 'Liberation Sans','Noto Sans CJK JP',sans-serif;color:#e4e6ea;letter-spacing:0.300px">外部</span>
<span class="t" style="left:124.10px;top:105.10px;font:normal 10px/14.00px 'Liberation Sans','Noto Sans CJK JP',sans-serif;color:#e4e6ea;letter-spacing:0.000px"><span class="k" style="font-weight:inherit;width:42.05px;transform:scaleX(0.9536)">eTransmit</span></span>
<span class="t" style="left:213.85px;top:104.40px;font:normal 10px/14.00px 'Liberation Sans','Noto Sans CJK JP',sans-serif;color:#e4e6ea;letter-spacing:0.000px"><span class="k" style="font-weight:inherit;position:relative;top:0.7px;width:30.09px;transform:scaleX(0.9500)">FormIt </span><span class="k" style="width:36.46px;transform:scaleX(0.7292)">コンバータ</span></span>
<span class="t" style="left:293.35px;top:105.10px;font:normal 10px/14.00px 'Liberation Sans','Noto Sans CJK JP',sans-serif;color:#e4e6ea;letter-spacing:0.000px"><span class="k" style="font-weight:inherit;width:57.05px;transform:scaleX(0.9773)">Revit Lookup</span></span>
<span class="t" style="left:1.10px;top:143.40px;font:normal 10px/14.00px 'Liberation Sans','Noto Sans CJK JP',sans-serif;color:#ffffff;letter-spacing:0.000px"><span class="k" style="width:35.90px;transform:scaleX(0.7266)">プロパティ</span></span>
<span class="t" style="left:60.60px;top:180.20px;font:normal 10px/14.00px 'Liberation Sans','Noto Sans CJK JP',sans-serif;color:#ffffff;letter-spacing:0.000px">平面図</span>
<span class="t" style="left:1.90px;top:220.40px;font:normal 10px/14.00px 'Liberation Sans','Noto Sans CJK JP',sans-serif;color:#e4e6ea;letter-spacing:0.000px">平面図: <span class="k" style="width:22.59px;transform:scaleX(0.7531)">レベル</span> 1</span>
<span class="t" style="left:235.50px;top:220.40px;font:normal 10px/14.00px 'Liberation Sans','Noto Sans CJK JP',sans-serif;color:#e4e6ea;letter-spacing:0.000px"><span class="k" style="width:21.80px;transform:scaleX(0.7267)">タイプ</span>編集</span>
<span class="t" style="left:1.10px;top:241.60px;font:bold 10px/14.00px 'Liberation Sans','Noto Sans CJK JP',sans-serif;color:#ffffff;letter-spacing:0.000px"><span class="k" style="width:51.80px;transform:scaleX(0.7453)">グラフィックス</span></span>
<span class="t" style="left:6.20px;top:257.40px;font:normal 10px/14.00px 'Liberation Sans','Noto Sans CJK JP',sans-serif;color:#e4e6ea;letter-spacing:0.000px"><span class="k" style="width:21.39px;transform:scaleX(0.7131)">ビュー</span> <span class="k" style="width:28.52px;transform:scaleX(0.7131)">スケール</span></span>
<span class="t" style="left:6.20px;top:273.40px;font:normal 10px/14.00px 'Liberation Sans','Noto Sans CJK JP',sans-serif;color:#8b93a1;letter-spacing:0.000px"><span class="k" style="width:37.60px;transform:scaleX(0.7520)">スケールの</span>値</span>
<span class="t" style="left:65.00px;top:274.10px;font:normal 10px/14.00px 'Liberation Sans','Noto Sans CJK JP',sans-serif;color:#8b93a1;letter-spacing:-0.600px">1:</span>
<span class="t" style="left:6.20px;top:289.40px;font:normal 10px/14.00px 'Liberation Sans','Noto Sans CJK JP',sans-serif;color:#e4e6ea;letter-spacing:0.000px"><span class="k" style="width:22.20px;transform:scaleX(0.7400)">モデル</span>表示</span>
<span class="t" style="left:6.20px;top:305.40px;font:normal 10px/14.00px 'Liberation Sans','Noto Sans CJK JP',sans-serif;color:#e4e6ea;letter-spacing:0.000px">詳細<span class="k" style="width:23.70px;transform:scaleX(0.7900)">レベル</span></span>
<span class="t" style="left:6.20px;top:321.40px;font:normal 10px/14.00px 'Liberation Sans','Noto Sans CJK JP',sans-serif;color:#e4e6ea;letter-spacing:0.000px"><span class="k" style="width:22.20px;transform:scaleX(0.7447)">パーツ</span>表示</span>
<span class="t" style="left:6.20px;top:337.40px;font:normal 10px/14.00px 'Liberation Sans','Noto Sans CJK JP',sans-serif;color:#e4e6ea;letter-spacing:0.000px">表示/<span class="k" style="width:59.00px;transform:scaleX(0.7421)">グラフィックスの</span>上書<span class="k" style="width:7.42px;transform:scaleX(0.7421)">き</span></span>
<span class="t" style="left:6.20px;top:353.40px;font:normal 10px/14.00px 'Liberation Sans','Noto Sans CJK JP',sans-serif;color:#e4e6ea;letter-spacing:0.000px"><span class="k" style="width:48.68px;transform:scaleX(0.7004)">グラフィックス</span>表示<span class="k" style="width:35.02px;transform:scaleX(0.7004)">オプション</span></span>
<span class="t" style="left:6.20px;top:368.90px;font:normal 10px/14.00px 'Liberation Sans','Noto Sans CJK JP',sans-serif;color:#e4e6ea;letter-spacing:0.000px">向<span class="k" style="width:7.60px;transform:scaleX(0.7600)">き</span></span>
<span class="t" style="left:134.00px;top:258.10px;font:normal 10px/14.00px 'Liberation Sans','Noto Sans CJK JP',sans-serif;color:#e4e6ea;letter-spacing:0.000px"><span class="k" style="font-weight:inherit;width:29.00px;transform:scaleX(0.9479)">1 : 100</span></span>
<span class="t" style="left:131.00px;top:274.10px;font:normal 10px/14.00px 'Liberation Sans','Noto Sans CJK JP',sans-serif;color:#8b93a1;letter-spacing:0.000px"><span class="k" style="font-weight:inherit;width:16.40px;transform:scaleX(0.9828)">100</span></span>
<span class="t" style="left:131.00px;top:289.40px;font:normal 10px/14.00px 'Liberation Sans','Noto Sans CJK JP',sans-serif;color:#e4e6ea;letter-spacing:0.400px">標準</span>
<span class="t" style="left:131.00px;top:305.40px;font:normal 10px/14.00px 'Liberation Sans','Noto Sans CJK JP',sans-serif;color:#e4e6ea;letter-spacing:0.400px">簡略</span>
<span class="t" style="left:131.00px;top:321.40px;font:normal 10px/14.00px 'Liberation Sans','Noto Sans CJK JP',sans-serif;color:#e4e6ea;letter-spacing:0.000px"><span class="k" style="width:45.90px;transform:scaleX(0.7650)">オリジナルを</span>表示</span>
<span class="t" style="left:181.10px;top:337.40px;font:normal 10px/14.00px 'Liberation Sans','Noto Sans CJK JP',sans-serif;color:#e4e6ea;letter-spacing:-0.257px">編集<span class="k" style="font-weight:inherit;position:relative;top:0.7px;width:7.16px;transform:scaleX(0.9500)">...</span></span>
<span class="t" style="left:181.10px;top:353.40px;font:normal 10px/14.00px 'Liberation Sans','Noto Sans CJK JP',sans-serif;color:#e4e6ea;letter-spacing:-0.257px">編集<span class="k" style="font-weight:inherit;position:relative;top:0.7px;width:7.16px;transform:scaleX(0.9500)">...</span></span>
<span class="t" style="left:131.00px;top:368.90px;font:normal 10px/14.00px 'Liberation Sans','Noto Sans CJK JP',sans-serif;color:#e4e6ea;letter-spacing:0.000px"><span class="k" style="width:50.40px;transform:scaleX(0.7200)">プロジェクトの</span>北</span>
<span class="t" style="left:239.60px;top:382.70px;font:normal 10px/14.00px 'Liberation Sans','Noto Sans CJK JP',sans-serif;color:#6f7787;letter-spacing:-0.200px">適用</span>
<span class="t" style="left:0.60px;top:401.40px;font:normal 10px/14.00px 'Liberation Sans','Noto Sans CJK JP',sans-serif;color:#ffffff;letter-spacing:0.000px"><span class="k" style="width:43.41px;transform:scaleX(0.7235)">プロジェクト</span> <span class="k" style="width:28.94px;transform:scaleX(0.7235)">ブラウザ</span> - <span class="k" style="width:43.41px;transform:scaleX(0.7235)">プロジェクト</span>1</span>
<span class="t" style="left:32.60px;top:424.90px;font:normal 10px/14.00px 'Liberation Sans','Noto Sans CJK JP',sans-serif;color:#8b93a1;letter-spacing:0.600px">検索</span>
<span class="t" style="left:35.47px;top:450.53px;font:normal 10.67px/14.94px 'Liberation Mono','IPAGothic','Noto Sans CJK JP',monospace;color:#d6dae0;letter-spacing:0.000px">ビュー<span class="k" style="font-weight:inherit;width:10.66px;transform:scaleX(0.8333)"> (</span>すべて<span class="k" style="font-weight:inherit;width:5.34px;transform:scaleX(0.8333)">)</span></span>
<span class="t" style="left:31.37px;top:467.43px;font:normal 10.67px/14.94px 'Liberation Mono','IPAGothic','Noto Sans CJK JP',monospace;color:#d6dae0;letter-spacing:0.000px">平面図</span>
<span class="t" style="left:31.37px;top:484.13px;font:normal 10.67px/14.94px 'Liberation Mono','IPAGothic','Noto Sans CJK JP',monospace;color:#d6dae0;letter-spacing:0.000px">天井伏図</span>
<span class="t" style="left:31.37px;top:500.83px;font:normal 10.67px/14.94px 'Liberation Mono','IPAGothic','Noto Sans CJK JP',monospace;color:#d6dae0;letter-spacing:0.000px">立面図<span class="k" style="font-weight:inherit;width:10.66px;transform:scaleX(0.8333)"> (</span>建物の立面<span class="k" style="font-weight:inherit;width:5.34px;transform:scaleX(0.8333)">)</span></span>
<span class="t" style="left:34.37px;top:517.53px;font:normal 10.67px/14.94px 'Liberation Mono','IPAGothic','Noto Sans CJK JP',monospace;color:#d6dae0;letter-spacing:0.000px">凡例</span>
<span class="t" style="left:34.37px;top:534.23px;font:normal 10.67px/14.94px 'Liberation Mono','IPAGothic','Noto Sans CJK JP',monospace;color:#d6dae0;letter-spacing:0.000px">集計表<span class="k" style="font-weight:inherit;width:5.34px;transform:scaleX(0.8333)">/</span>数量<span class="k" style="font-weight:inherit;width:10.66px;transform:scaleX(0.8333)"> (</span>すべて<span class="k" style="font-weight:inherit;width:5.34px;transform:scaleX(0.8333)">)</span></span>
<span class="t" style="left:34.37px;top:550.93px;font:normal 10.67px/14.94px 'Liberation Mono','IPAGothic','Noto Sans CJK JP',monospace;color:#d6dae0;letter-spacing:0.000px">シート<span class="k" style="font-weight:inherit;width:10.66px;transform:scaleX(0.8333)"> (</span>すべて<span class="k" style="font-weight:inherit;width:5.34px;transform:scaleX(0.8333)">)</span></span>
<span class="t" style="left:35.47px;top:567.63px;font:normal 10.67px/14.94px 'Liberation Mono','IPAGothic','Noto Sans CJK JP',monospace;color:#d6dae0;letter-spacing:0.000px">ファミリ</span>
<span class="t" style="left:35.47px;top:584.33px;font:normal 10.67px/14.94px 'Liberation Mono','IPAGothic','Noto Sans CJK JP',monospace;color:#d6dae0;letter-spacing:0.000px">グループ</span>
<span class="t" style="left:310.40px;top:144.70px;font:bold 10px/14.00px 'Liberation Sans','Noto Sans CJK JP',sans-serif;color:#ffffff;letter-spacing:0.000px"><span class="k" style="width:22.46px;transform:scaleX(0.7485)">レベル</span> 1</span>
</div></body></html>
